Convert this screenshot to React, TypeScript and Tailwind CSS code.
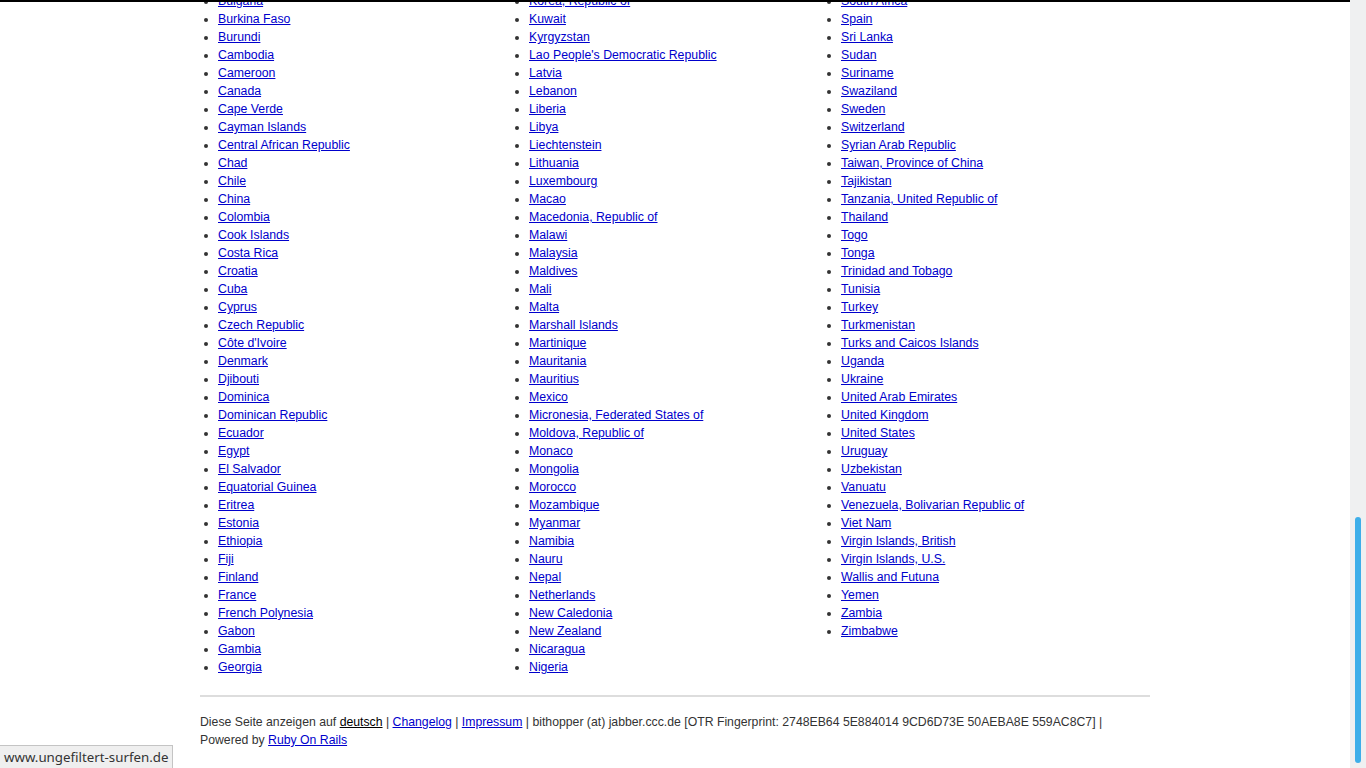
import React from 'react';

const col1 = [
  'Bulgaria', 'Burkina Faso', 'Burundi', 'Cambodia', 'Cameroon', 'Canada', 'Cape Verde',
  'Cayman Islands', 'Central African Republic', 'Chad', 'Chile', 'China', 'Colombia',
  'Cook Islands', 'Costa Rica', 'Croatia', 'Cuba', 'Cyprus', 'Czech Republic', "Côte d'Ivoire",
  'Denmark', 'Djibouti', 'Dominica', 'Dominican Republic', 'Ecuador', 'Egypt', 'El Salvador',
  'Equatorial Guinea', 'Eritrea', 'Estonia', 'Ethiopia', 'Fiji', 'Finland', 'France',
  'French Polynesia', 'Gabon', 'Gambia', 'Georgia',
];

const col2 = [
  'Korea, Republic of', 'Kuwait', 'Kyrgyzstan', "Lao People's Democratic Republic", 'Latvia',
  'Lebanon', 'Liberia', 'Libya', 'Liechtenstein', 'Lithuania', 'Luxembourg', 'Macao',
  'Macedonia, Republic of', 'Malawi', 'Malaysia', 'Maldives', 'Mali', 'Malta',
  'Marshall Islands', 'Martinique', 'Mauritania', 'Mauritius', 'Mexico',
  'Micronesia, Federated States of', 'Moldova, Republic of', 'Monaco', 'Mongolia', 'Morocco',
  'Mozambique', 'Myanmar', 'Namibia', 'Nauru', 'Nepal', 'Netherlands', 'New Caledonia',
  'New Zealand', 'Nicaragua', 'Nigeria',
];

const col3 = [
  'South Africa', 'Spain', 'Sri Lanka', 'Sudan', 'Suriname', 'Swaziland', 'Sweden',
  'Switzerland', 'Syrian Arab Republic', 'Taiwan, Province of China', 'Tajikistan',
  'Tanzania, United Republic of', 'Thailand', 'Togo', 'Tonga', 'Trinidad and Tobago', 'Tunisia',
  'Turkey', 'Turkmenistan', 'Turks and Caicos Islands', 'Uganda', 'Ukraine',
  'United Arab Emirates', 'United Kingdom', 'United States', 'Uruguay', 'Uzbekistan', 'Vanuatu',
  'Venezuela, Bolivarian Republic of', 'Viet Nam', 'Virgin Islands, British',
  'Virgin Islands, U.S.', 'Wallis and Futuna', 'Yemen', 'Zambia', 'Zimbabwe',
];

function CountryColumn({ items }: { items: string[] }) {
  return (
    <ul className="list-disc pl-[18px] text-[12.3px]">
      {items.map((name) => (
        <li key={name} className="leading-[18px]">
          <a href="#" className="text-[#0000cc] underline">
            {name}
          </a>
        </li>
      ))}
    </ul>
  );
}

export default function App() {
  return (
    <div className="relative h-screen overflow-hidden bg-white font-['Liberation_Sans',Arial,sans-serif] text-[12px] text-[#333]">
      {/* page content, scrolled down */}
      <div className="mr-4 -mt-2">
        <div className="mx-auto w-[950px]">
          <div className="grid grid-cols-[311px_312px_327px]">
            <CountryColumn items={col1} />
            <CountryColumn items={col2} />
            <CountryColumn items={col3} />
          </div>

          <hr className="mt-[19px] border-0 border-t-2 border-[#dddddd]" />

          <div className="mt-[16px] text-[12.25px] leading-[18px]">
            Diese Seite anzeigen auf{' '}
            <a href="#" className="text-black underline">deutsch</a>
            {' | '}
            <a href="#" className="text-[#0000cc] underline">Changelog</a>
            {' | '}
            <a href="#" className="text-[#0000cc] underline">Impressum</a>
            {' | bithopper (at) jabber.ccc.de [OTR Fingerprint: 2748EB64 5E884014 9CD6D73E 50AEBA8E 559AC8C7] |'}
            <br />
            Powered by <a href="#" className="text-[#0000cc] underline">Ruby On Rails</a>
          </div>
        </div>
      </div>

      {/* top edge line */}
      <div className="absolute left-0 top-0 h-[2px] w-[1350px] bg-black" />

      {/* scrollbar */}
      <div className="absolute right-0 top-0 h-full w-4 bg-[#eff0f1]">
        <div className="absolute left-[5px] top-[517px] h-[246px] w-[6px] rounded-full bg-[#3daee9]" />
      </div>

      {/* status bubble */}
      <div className="absolute bottom-0 left-0 border-r border-t border-[#c4c4c4] bg-[#efefef] px-1 py-[2px] font-['Noto_Sans',sans-serif] text-[13.3px] leading-[18px] text-[#333]">
        www.ungefiltert-surfen.de
      </div>
    </div>
  );
}
